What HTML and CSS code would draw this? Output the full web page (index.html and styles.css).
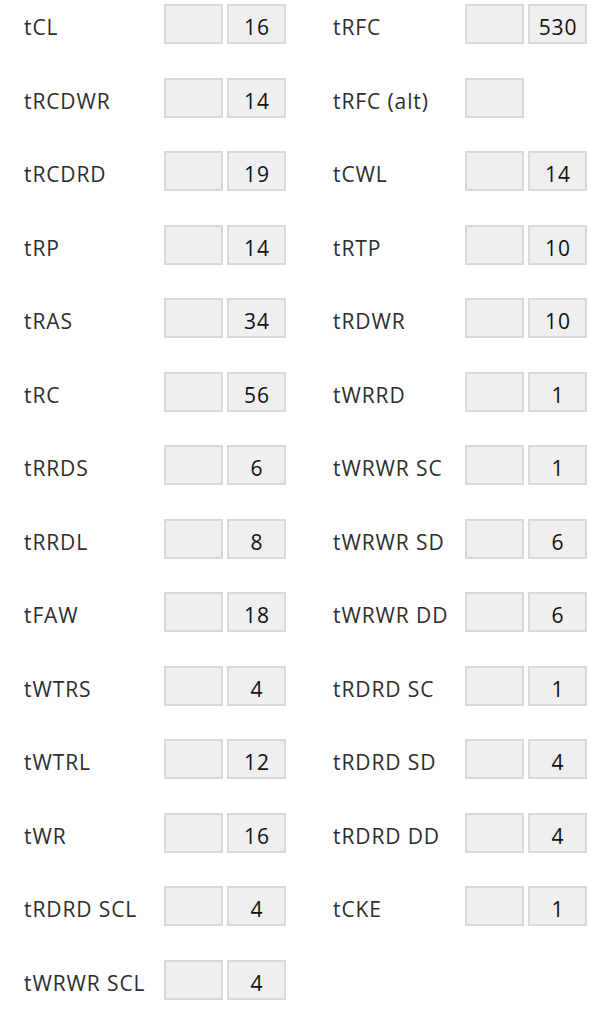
FILE: index.html
```html
<!DOCTYPE html>
<html>
<head>
<meta charset="utf-8">
<link rel="stylesheet" href="styles.css">
</head>
<body>
<div class="timings">
  <div class="col col-left">
    <div class="row"><span class="label">tCL</span><span class="box"></span><span class="box">16</span></div>
    <div class="row"><span class="label">tRCDWR</span><span class="box"></span><span class="box">14</span></div>
    <div class="row"><span class="label">tRCDRD</span><span class="box"></span><span class="box">19</span></div>
    <div class="row"><span class="label">tRP</span><span class="box"></span><span class="box">14</span></div>
    <div class="row"><span class="label">tRAS</span><span class="box"></span><span class="box">34</span></div>
    <div class="row"><span class="label">tRC</span><span class="box"></span><span class="box">56</span></div>
    <div class="row"><span class="label">tRRDS</span><span class="box"></span><span class="box">6</span></div>
    <div class="row"><span class="label">tRRDL</span><span class="box"></span><span class="box">8</span></div>
    <div class="row"><span class="label">tFAW</span><span class="box"></span><span class="box">18</span></div>
    <div class="row"><span class="label">tWTRS</span><span class="box"></span><span class="box">4</span></div>
    <div class="row"><span class="label">tWTRL</span><span class="box"></span><span class="box">12</span></div>
    <div class="row"><span class="label">tWR</span><span class="box"></span><span class="box">16</span></div>
    <div class="row"><span class="label">tRDRD SCL</span><span class="box"></span><span class="box">4</span></div>
    <div class="row"><span class="label">tWRWR SCL</span><span class="box"></span><span class="box">4</span></div>
  </div>
  <div class="col col-right">
    <div class="row"><span class="label">tRFC</span><span class="box"></span><span class="box">530</span></div>
    <div class="row"><span class="label">tRFC (alt)</span><span class="box"></span></div>
    <div class="row"><span class="label">tCWL</span><span class="box"></span><span class="box">14</span></div>
    <div class="row"><span class="label">tRTP</span><span class="box"></span><span class="box">10</span></div>
    <div class="row"><span class="label">tRDWR</span><span class="box"></span><span class="box">10</span></div>
    <div class="row"><span class="label">tWRRD</span><span class="box"></span><span class="box">1</span></div>
    <div class="row"><span class="label">tWRWR SC</span><span class="box"></span><span class="box">1</span></div>
    <div class="row"><span class="label">tWRWR SD</span><span class="box"></span><span class="box">6</span></div>
    <div class="row"><span class="label">tWRWR DD</span><span class="box"></span><span class="box">6</span></div>
    <div class="row"><span class="label">tRDRD SC</span><span class="box"></span><span class="box">1</span></div>
    <div class="row"><span class="label">tRDRD SD</span><span class="box"></span><span class="box">4</span></div>
    <div class="row"><span class="label">tRDRD DD</span><span class="box"></span><span class="box">4</span></div>
    <div class="row"><span class="label">tCKE</span><span class="box"></span><span class="box">1</span></div>
  </div>
</div>
</body>
</html>
```

FILE: styles.css
```css
html, body {
  margin: 0;
  padding: 0;
  background: #ffffff;
}

.timings {
  display: grid;
  grid-template-columns: 309px auto;
  padding: 4px 0 0 24px;
  font-family: "Open Sans", "Noto Sans", sans-serif;
  font-size: 21px;
  letter-spacing: 0.9px;
  color: #2e2e2e;
}

.col {
  display: flex;
  flex-direction: column;
  gap: 33.5px;
}

.row {
  display: flex;
  align-items: stretch;
  height: 40px;
  gap: 4px;
}

.label {
  box-sizing: border-box;
  padding-top: 3px;
  line-height: 40px;
  white-space: nowrap;
}

.col-left .label {
  width: 136px;
}

.col-right .label {
  width: 128px;
}

.box {
  box-sizing: border-box;
  width: 59px;
  height: 40px;
  border: 2px solid #d9d9d9;
  background: #efefef;
  text-align: center;
  line-height: 36px;
  padding-top: 3px;
  padding-left: 1px;
  color: #111111;
}
```
